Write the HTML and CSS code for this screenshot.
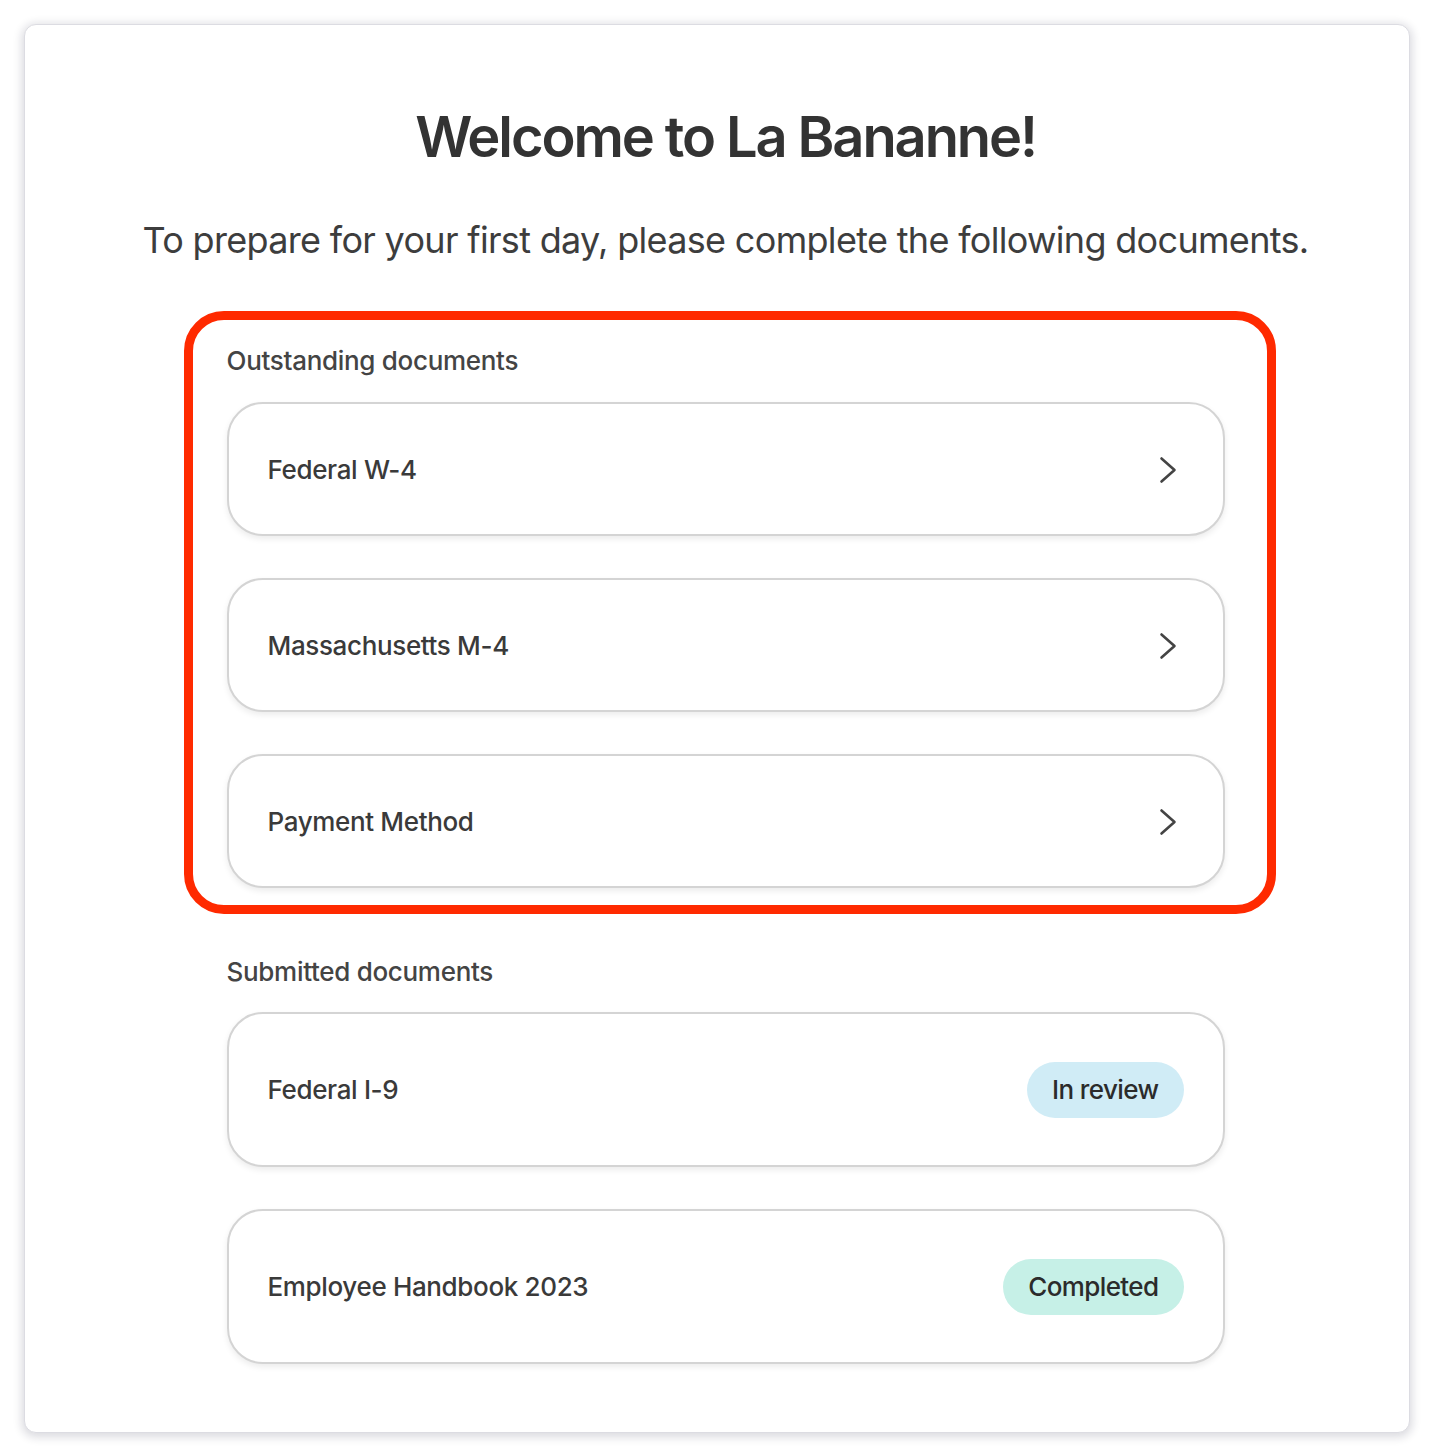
FILE: index.html
```html
<!DOCTYPE html>
<html lang="en">
<head>
<meta charset="utf-8">
<title>Welcome to La Bananne!</title>
<link rel="stylesheet" href="styles.css">
</head>
<body>
<div class="frame">
<main class="card">
  <h1 class="title">Welcome to La Bananne!</h1>
  <p class="subtitle">To prepare for your first day, please complete the following documents.</p>
  <div class="column">
    <section class="outstanding">
      <h2 class="section-title">Outstanding documents</h2>
      <ul class="doc-list">
        <li class="doc doc-short"><span class="doc-name">Federal W-4</span>
          <svg class="chev" viewBox="0 0 32 32" width="32" height="32"><path d="M9.5 4.5 L22.5 16 L9.5 27.5" fill="none" stroke="#444" stroke-width="2.6" stroke-linecap="round" stroke-linejoin="round"/></svg></li>
        <li class="doc doc-short"><span class="doc-name">Massachusetts M-4</span>
          <svg class="chev" viewBox="0 0 32 32" width="32" height="32"><path d="M9.5 4.5 L22.5 16 L9.5 27.5" fill="none" stroke="#444" stroke-width="2.6" stroke-linecap="round" stroke-linejoin="round"/></svg></li>
        <li class="doc doc-short"><span class="doc-name">Payment Method</span>
          <svg class="chev" viewBox="0 0 32 32" width="32" height="32"><path d="M9.5 4.5 L22.5 16 L9.5 27.5" fill="none" stroke="#444" stroke-width="2.6" stroke-linecap="round" stroke-linejoin="round"/></svg></li>
      </ul>
    </section>
    <section class="submitted">
      <h2 class="section-title">Submitted documents</h2>
      <ul class="doc-list">
        <li class="doc doc-tall"><span class="doc-name">Federal I-9</span><span class="badge badge-review">In review</span></li>
        <li class="doc doc-tall"><span class="doc-name">Employee Handbook 2023</span><span class="badge badge-done">Completed</span></li>
      </ul>
    </section>
  </div>
</main>
</div>
</body>
</html>
```
FILE: styles.css
```css
* { box-sizing: border-box; }
html, body { background: #ffffff; }
body {
  margin: 0;
  font-family: Inter, "Noto Sans", "Liberation Sans", sans-serif;
  color: #333;
}
.frame {
  padding: 24px;
  background: #fff;
}
.card {
  width: 1386px;
  min-height: 1408px;
  background: #fff;
  border: 1px solid #dcdce2;
  border-radius: 12px;
  box-shadow: 0 2px 10px 2px rgba(20, 20, 50, 0.16);
  padding: 78px 0 68px 17px;
}
.title {
  margin: 0;
  text-align: center;
  font-size: 56px;
  line-height: 68px;
  font-weight: 600;
  letter-spacing: -2.1px;
  color: #333;
}
.subtitle {
  margin: 47px 0 0;
  text-align: center;
  font-size: 36px;
  line-height: 44px;
  font-weight: 400;
  letter-spacing: -0.68px;
  color: #3d3d3d;
}
.column {
  width: 998px;
  margin: 0 auto;
}
.outstanding {
  margin: 49px -51px 0 -43px;
  border: 9px solid #ff2a00;
  border-radius: 40px;
  padding: 25px 42px 17px 34px;
}
.submitted {
  margin-top: 42px;
}
.section-title {
  margin: 0;
  font-size: 26px;
  line-height: 32px;
  font-weight: 500;
  color: #444;
  letter-spacing: -0.3px;
}
.doc-list {
  list-style: none;
  margin: 25px 0 0;
  padding: 0;
  display: flex;
  flex-direction: column;
  gap: 42px;
}
.submitted .doc-list { margin-top: 24px; }
.doc {
  display: flex;
  align-items: center;
  justify-content: space-between;
  border: 2px solid #d4d4d4;
  border-radius: 36px;
  padding: 0 39px;
  background: #fff;
  box-shadow: 0 3px 6px rgba(0, 0, 0, 0.08);
}
.doc-short { height: 134px; }
.doc-tall { height: 155px; }
.doc-name {
  font-size: 26px;
  font-weight: 500;
  color: #3a3a3a;
  letter-spacing: -0.35px;
}
.chev { display: block; margin-top: 2px; }
.badge {
  display: inline-flex;
  align-items: center;
  height: 56px;
  padding: 0 25px;
  border-radius: 28px;
  font-size: 26px;
  font-weight: 500;
  color: #2b2b2b;
  letter-spacing: -0.6px;
}
.badge-review { background: #d0ecf6; }
.badge-done { background: #c6f0e7; }
```
